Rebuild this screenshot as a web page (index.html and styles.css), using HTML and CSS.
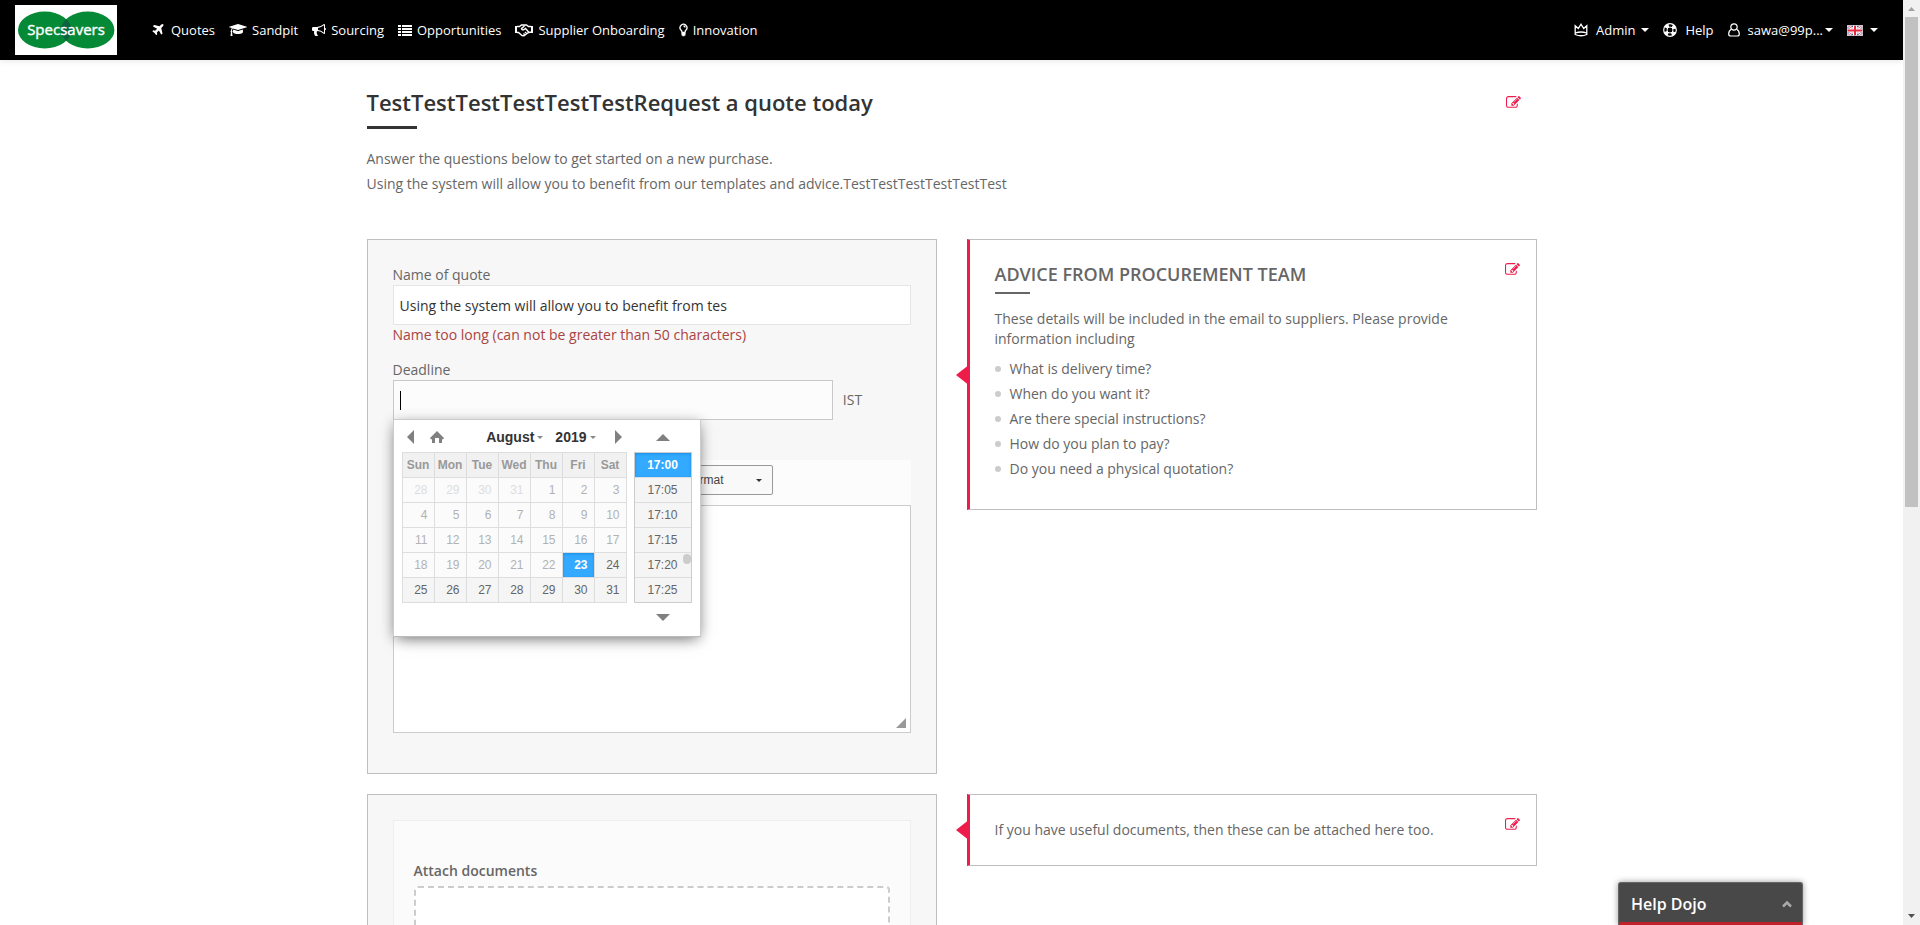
FILE: index.html
```html
<!DOCTYPE html>
<html lang="en">
<head>
<meta charset="utf-8">
<title>Request a quote</title>
<link rel="stylesheet" href="styles.css">
</head>
<body>
<svg class="sprite" aria-hidden="true">
  <symbol id="edit" viewBox="0 0 1792 1792"><path d="M888 1184l116-116-152-152-116 116v56h96v96h56zm440-720q-16-16-33 1l-350 350q-17 17-1 33t33-1l350-350q17-17 1-33zm80 594v190q0 119-84.500 203.500t-203.500 84.500h-832q-119 0-203.500-84.500t-84.500-203.500v-832q0-119 84.500-203.500t203.500-84.500h832q63 0 117 25 15 7 18 23 3 17-9 29l-49 49q-14 14-32 8-23-6-45-6h-832q-66 0-113 47t-47 113v832q0 66 47 113t113 47h832q66 0 113-47t47-113v-126q0-13 9-22l64-64q15-15 35-7t20 29zm-96-738l288 288-672 672h-288v-288zm444 132l-92 92-288-288 92-92q28-28 68-28t68 28l152 152q28 28 28 68t-28 68z"/></symbol>
</svg>
<div class="app">
  <div class="page">
    <header class="navbar">
      <a class="logo" href="#" aria-label="Specsavers">
        <svg width="102" height="50" viewBox="0 0 102 50">
          <rect width="102" height="50" fill="#fff"/>
          <ellipse cx="29.700" cy="25" rx="26.700" ry="18.500" fill="#048a36"/>
          <ellipse cx="72.700" cy="25" rx="26.700" ry="18.500" fill="#048a36"/>
          <path d="M51.200 14Q56.400 19 56.400 25T51.200 36Q46 31 46 25T51.200 14z" fill="#0b6440"/>
          <text x="51" y="30" text-anchor="middle" class="logo-text">Specsavers</text>
        </svg>
      </a>
      <nav class="menu">
        <a href="#"><svg class="gap-wide" width="14" height="14" viewBox="0 0 1792 1792"><path d="M1568 160q44 52 12 148t-108 172l-161 161 160 696q5 19-12 33l-128 96q-7 6-19 6-4 0-7-1-15-3-21-16l-279-508-259 259 53 194q5 17-8 31l-96 96q-9 9-23 9h-2q-15-2-24-13l-189-252-252-189q-11-7-13-23-1-13 9-25l96-97q9-9 23-9 6 0 8 1l194 53 259-259-508-279q-14-8-17-24-2-16 9-27l128-128q14-13 30-8l665 159 160-160q76-76 172-108t148 12z"/></svg>Quotes</a>
        <a href="#"><svg width="18" height="14" viewBox="0 0 2304 1792"><path d="M1774 836l18 316q4 69-82 128t-235 93.500-323 34.500-323-34.500-235-93.500-82-128l18-316 574 181q22 7 48 7t48-7zm530-324q0 23-22 31l-1120 352q-4 1-10 1t-10-1l-652-206q-43 34-71 111.500t-34 178.500q63 36 63 109 0 69-58 107l58 433q2 14-8 25-9 11-24 11h-192q-15 0-24-11-10-11-8-25l58-433q-58-38-58-107 0-73 65-111 11-207 98-330l-333-104q-22-8-22-31t22-31l1120-352q4-1 10-1t10 1l1120 352q22 8 22 31z"/></svg>Sandpit</a>
        <a href="#"><svg width="14" height="14" viewBox="0 0 1792 1792"><path d="M1664 640q53 0 90.500 37.500t37.500 90.500-37.500 90.500-90.500 37.500v384q0 52-38 90t-90 38q-417-347-812-380-58 19-91 66t-31 100.500 40 92.500q-20 33-23 65.500t6 58 33.500 55 48 50 61.500 50.500q-29 58-111.500 83t-168.500 11.500-132-55.500q-7-23-29.500-87.500t-32-94.500-23-89-15-101 3.500-98.500 22-110.500h-122q-66 0-113-47t-47-113v-192q0-66 47-113t113-47h480q435 0 896-384 52 0 90 38t38 90v384zm-128 604v-954q-394 302-768 343v270q377 42 768 341z"/></svg>Sourcing</a>
        <a href="#"><svg width="14" height="14" viewBox="0 0 14 14"><path d="M0 2h3v2H0zM4 2h10v2H4zM0 5h3v2H0zM4 5h10v2H4zM0 8h3v2H0zM4 8h10v2H4zM0 11h3v2H0zM4 11h10v2H4z"/></svg>Opportunities</a>
        <a href="#"><svg width="18" height="14" viewBox="0 0 18 14"><path d="M0 3h2v7H0zM16 3h2v7h-2z"/><path d="M2 3.500h2.500L6.500 2h5l2 1.500H16M2 9.500h1.500L7 12.500l2 .3 4-3 1.500-.5H16M9.500 3L6.500 5.500q.5 2 2.500 1l1.500-1 3.500 4M10 9l1.500 1.500M8.500 10.500l1 1" fill="none" stroke="currentColor" stroke-width="1.400"/></svg>Supplier Onboarding</a>
        <a href="#"><svg width="9" height="14" viewBox="0 0 9 14"><path d="M3 9.500Q3 8 2 7A3.400 3.400 0 1 1 7 7Q6 8 6 9.500zM4.500 3Q6 3 6 4.500" fill="none" stroke="currentColor" stroke-width="1.300"/><path d="M2.500 10h4v2.500h-1v.8h-2v-.8h-1z"/></svg>Innovation</a>
      </nav>
      <nav class="account">
        <a href="#"><svg class="gap-wide" width="14" height="14" viewBox="0 0 14 14"><path d="M1.200 10V2.800L4.300 5.500 7 1.200 9.700 5.500l3.100-2.700V10Q7 8 1.200 10zM1.200 10v1.500Q7 14 12.800 11.500V10" fill="none" stroke="currentColor" stroke-width="1.300"/></svg>Admin<i class="caret caret--far"></i></a>
        <a href="#"><svg class="gap-wide" width="14" height="14" viewBox="0 0 14 14"><circle cx="7" cy="7" r="6.300" fill="none" stroke="currentColor" stroke-width="1.200"/><circle cx="7" cy="7" r="4.700" fill="none" stroke="currentColor" stroke-width="3.400" stroke-dasharray="3.700 3.680" stroke-dashoffset="-1.850"/><circle cx="7" cy="7" r="3" fill="none" stroke="currentColor"/></svg>Help</a>
        <a href="#"><svg class="gap-wide" width="12" height="14" viewBox="0 0 12 14"><circle cx="6" cy="4" r="3.200" fill="none" stroke="currentColor" stroke-width="1.200"/><path d="M3.300 6.200Q.7 7.500.7 11q0 2 2 2h6.600q2 0 2-2 0-3.500-2.600-4.800" fill="none" stroke="currentColor" stroke-width="1.200"/></svg>sawa@99p...<i class="caret"></i></a>
        <a href="#" aria-label="Language"><svg width="16" height="11" viewBox="0 0 16 11"><rect width="16" height="11" fill="#4a62a8"/><path d="M0 0l16 11M16 0L0 11" stroke="#fff" stroke-width="2.400"/><path d="M0 0l16 11M16 0L0 11" stroke="#e04050" stroke-width=".8"/><path d="M8 0v11M0 5.500h16" stroke="#fff" stroke-width="4"/><path d="M8 0v11M0 5.500h16" stroke="#e8283c" stroke-width="2"/><rect x=".5" y=".5" width="15" height="10" fill="none" stroke="#ccc" stroke-opacity=".8"/></svg><i class="caret"></i></a>
      </nav>
    </header>

    <main class="container">
      <div class="intro">
        <div>
          <h1>TestTestTestTestTestTestRequest a quote today</h1>
          <p>Answer the questions below to get started on a new purchase.<br>Using the system will allow you to benefit from our templates and advice.TestTestTestTestTestTest</p>
        </div>
        <button class="edit" type="button" aria-label="Edit introduction"><svg width="15" height="15"><use href="#edit"/></svg></button>
      </div>

      <section class="row">
        <form class="panel">
          <div class="field">
            <label for="name">Name of quote</label>
            <input class="text-input" id="name" type="text" value="Using the system will allow you to benefit from tes">
            <p class="error">Name too long (can not be greater than 50 characters)</p>
          </div>
          <div class="field">
            <label for="deadline">Deadline</label>
            <div class="deadline">
              <div class="deadline__box">
                <input class="text-input text-input--active" id="deadline" type="text">
                <i class="cursor"></i>
                <div class="picker">
                  <div class="calendar">
                    <div class="calendar__bar">
                      <button type="button" aria-label="Previous month"><svg width="7" height="14"><path d="M7 0v14L0 7z"/></svg></button>
                      <button class="home" type="button" aria-label="Today"><svg width="14" height="12"><path d="M7 0l7 7-1 1.500L12 8v4H9V7H5v5H2V8l-1 .5L0 7z"/></svg></button>
                      <button class="month" type="button">August<i></i></button>
                      <button class="year" type="button">2019<i></i></button>
                      <button type="button" aria-label="Next month"><svg width="7" height="14"><path d="M0 0v14l7-7z"/></svg></button>
                    </div>
                    <table>
                      <thead><tr><th>Sun</th><th>Mon</th><th>Tue</th><th>Wed</th><th>Thu</th><th>Fri</th><th>Sat</th></tr></thead>
                      <tbody>
                        <tr class="past"><td class="other">28</td><td class="other">29</td><td class="other">30</td><td class="other">31</td><td>1</td><td>2</td><td>3</td></tr>
                        <tr class="past"><td>4</td><td>5</td><td>6</td><td>7</td><td>8</td><td>9</td><td>10</td></tr>
                        <tr class="past"><td>11</td><td>12</td><td>13</td><td>14</td><td>15</td><td>16</td><td>17</td></tr>
                        <tr class="past"><td>18</td><td>19</td><td>20</td><td>21</td><td>22</td><td class="selected">23</td><td class="open">24</td></tr>
                        <tr><td>25</td><td>26</td><td>27</td><td>28</td><td>29</td><td>30</td><td>31</td></tr>
                      </tbody>
                    </table>
                  </div>
                  <div class="times">
                    <button class="times__arrow times__arrow--up" type="button" aria-label="Earlier"><svg width="14" height="7"><path d="M0 7L7 0l7 7z"/></svg></button>
                    <div class="times__list">
                      <button class="selected" type="button">17:00</button>
                      <button type="button">17:05</button>
                      <button type="button">17:10</button>
                      <button type="button">17:15</button>
                      <button type="button">17:20</button>
                      <button type="button">17:25</button>
                      <i class="times__thumb"></i>
                    </div>
                    <button class="times__arrow" type="button" aria-label="Later"><svg width="14" height="7"><path d="M0 0h14L7 7z"/></svg></button>
                  </div>
                </div>
              </div>
              <span>IST</span>
            </div>
          </div>
          <div class="editor">
            <div class="editor__bar">
              <div class="format">
                <select aria-label="Paragraph format"><option>Format</option></select>
                <svg width="6" height="3"><path d="M0 0h6L3 3z"/></svg>
              </div>
            </div>
            <div class="editor__area">
              <textarea aria-label="Quote details"></textarea>
              <svg class="grip" width="10" height="10"><path d="M10 0v10H0z"/></svg>
            </div>
          </div>
        </form>
        <aside class="note">
          <div class="note__body">
            <h2>ADVICE FROM PROCUREMENT TEAM</h2>
            <p>These details will be included in the email to suppliers. Please provide information including</p>
            <ul>
              <li>What is delivery time?</li>
              <li>When do you want it?</li>
              <li>Are there special instructions?</li>
              <li>How do you plan to pay?</li>
              <li>Do you need a physical quotation?</li>
            </ul>
          </div>
          <button class="edit" type="button" aria-label="Edit advice"><svg width="15" height="15"><use href="#edit"/></svg></button>
        </aside>
      </section>

      <section class="row">
        <div class="panel">
          <div class="upload">
            <h3>Attach documents</h3>
            <div class="dropzone"></div>
          </div>
        </div>
        <aside class="note">
          <div class="note__body">
            <p>If you have useful documents, then these can be attached here too.</p>
          </div>
          <button class="edit" type="button" aria-label="Edit note"><svg width="15" height="15"><use href="#edit"/></svg></button>
        </aside>
      </section>
    </main>

    <button class="dojo" type="button">Help Dojo<svg width="10" height="8"><path d="M1 6.500l4-4 4 4" fill="none" stroke="#aaa" stroke-width="2.500"/></svg></button>
  </div>
  <div class="scrollbar" aria-hidden="true">
    <svg width="17" height="17"><path d="M5 11h7L8.500 7z" fill="#a3a3a3"/></svg>
    <i class="scrollbar__thumb"></i>
    <svg class="scrollbar__down" width="17" height="17"><path d="M5 6h7l-3.500 4z" fill="#505050"/></svg>
  </div>
</div>
</body>
</html>
```

FILE: styles.css
```css
* { box-sizing: border-box; }
body {
  margin: 0;
  color: #666;
  background: #fff;
  font: 14px/20px "Open Sans", "Noto Sans", sans-serif;
}
h1, h2, h3, p, ul { margin: 0; padding: 0; font-weight: 400; }
button { margin: 0; padding: 0; border: 0; background: none; font: inherit; color: inherit; }
button svg { display: block; }
svg { fill: currentColor; flex: none; }
.sprite { display: none; }

.app { display: grid; grid-template-columns: 1fr 17px; height: 100vh; overflow: hidden; }
.page { position: relative; overflow: hidden; }

/* Navigation */
.navbar {
  display: flex;
  align-items: center;
  height: 60px;
  padding: 0 25px 0 15px;
  background: #000;
  color: #fff;
  font-size: 13px;
  font-weight: 500;
  box-shadow: 0 1px 6px rgba(0, 0, 0, .1);
}
.logo { display: block; height: 50px; margin-right: 34px; }
.logo-text { font: 400 15px "Open Sans", sans-serif; fill: #fff; stroke: #fff; stroke-width: .4px; }
.menu, .account { display: flex; gap: 14px; }
.account { margin-left: auto; }
.navbar nav a { display: flex; align-items: center; color: inherit; text-decoration: none; }
.navbar nav svg { margin-right: 5px; }
.navbar nav .gap-wide { margin-right: 8px; }
.menu a:first-child svg { margin-right: 6px; }
.caret { margin-left: 2px; border: 4px solid transparent; border-top-color: #fff; border-bottom: 0; }
.caret--far { margin-left: 6px; }

/* Main content */
.container { width: 100%; max-width: 1170px; margin: 0 auto; padding-top: 27px; }
.intro { display: flex; justify-content: space-between; align-items: flex-start; margin-bottom: 43px; padding-right: 16px; }
.intro h1 { color: #333; font-size: 22px; font-weight: 600; line-height: 30px; }
.intro h1::after { content: ""; display: block; width: 50px; height: 3px; margin: 9px 0 17px; background: #333; }
.intro p { line-height: 25px; }
.edit { color: #ee1c4b; }
.intro .edit { padding-top: 8px; }

.row { display: grid; grid-template-columns: 1fr 1fr; gap: 30px; align-items: start; margin-bottom: 20px; }
.panel { padding: 25px; background: #f7f7f7; border: 1px solid #bfbfbf; }
.field { margin-bottom: 15px; }
.field label { display: block; }
.text-input {
  display: block;
  width: 100%;
  height: 40px;
  padding: 0 6px;
  border: 1px solid #e5e5e5;
  background: #fff;
  color: #333;
  font: inherit;
  outline: 0;
}
.text-input--active { border-color: #c8c8c8; background: #fcfcfc; }
.error { color: #a94442; }
.deadline { display: flex; align-items: center; gap: 10px; }
.deadline__box { position: relative; width: 85%; }
.cursor { position: absolute; left: 7px; top: 11px; width: 1px; height: 19px; background: #000; }

/* Date and time picker */
.picker {
  position: absolute;
  z-index: 2;
  top: 39px;
  left: 0;
  display: flex;
  gap: 7px;
  padding: 8px 8px 4px;
  border: 1px solid #ccc;
  border-bottom-color: #bbb;
  background: #fff;
  color: #808080;
  box-shadow: 0 5px 15px -5px rgba(0, 0, 0, .5), 0 2px 12px rgba(0, 0, 0, .2);
  font: 12px/24px "Liberation Sans", Arial, sans-serif;
}
.calendar { width: 225px; }
.calendar__bar { display: flex; align-items: center; height: 18px; margin-bottom: 6px; padding: 0 5px; }
.home { margin-left: 16px; }
.month, .year { display: flex; align-items: center; gap: 3px; color: #333; font-size: 14px; font-weight: 700; }
.month { margin-left: auto; }
.year { margin: 0 19px 0 12px; }
.month i, .year i { border: 3px solid transparent; border-top-color: #888; border-bottom: 0; }
.calendar table { width: 100%; border-collapse: collapse; table-layout: fixed; }
.calendar th, .calendar td { height: 25px; padding: 0; border: 1px solid #ddd; background: #f5f5f5; line-height: 24px; }
.calendar th { background: #f1f1f1; color: #999; }
.calendar td { padding-right: 6px; color: #666; text-align: right; }
.calendar .past td { background: #fbfbfb; color: #b2b2b2; }
.calendar .past .other { color: #ddd; }
.calendar .past .open { background: #f5f5f5; color: #666; }
.calendar .past .selected, .times__list .selected {
  background: #33aaff;
  box-shadow: inset 0 1px 3px #178fe5;
  color: #fff;
  font-weight: 700;
}
.times { display: flex; flex-direction: column; width: 58px; }
.times__arrow { display: flex; align-items: center; justify-content: center; height: 29px; }
.times__arrow--up { height: 24px; padding-bottom: 5px; }
.times__list { position: relative; border: 1px solid #ccc; }
.times__list button { display: block; width: 100%; height: 25px; border-bottom: 1px solid #ddd; background: #f5f5f5; color: #666; }
.times__list button:nth-child(6) { height: 24px; border-bottom: 0; }
.times__thumb { position: absolute; right: 0; top: 101px; width: 8px; height: 10px; border-radius: 4px; background: #ccc; }

/* Text editor */
.editor { margin: 40px 0 15px; }
.editor__bar { display: flex; height: 45px; padding: 5px 0 10px 280px; background: #fcfcfc; }
.format { position: relative; width: 100px; }
.format select {
  width: 100%;
  height: 30px;
  padding: 0 12px;
  border: 1px solid #999;
  border-radius: 2px;
  background: #f9f9f9;
  color: #444;
  font: 12px "Liberation Sans", Arial, sans-serif;
  appearance: none;
}
.format svg { position: absolute; right: 11px; top: 14px; color: #333; }
.editor__area { position: relative; }
.editor textarea { display: block; width: 100%; height: 228px; border: 1px solid #ccc; background: #fff; resize: none; }
.grip { position: absolute; right: 5px; bottom: 5px; color: #999; }

/* Advice notes */
.note {
  position: relative;
  display: flex;
  align-items: flex-start;
  justify-content: space-between;
  padding: 22px 16px 22px 25px;
  border: 1px solid #bfbfbf;
  border-left: 3px solid #ee1c4b;
}
.note::before {
  content: "";
  position: absolute;
  top: 50%;
  right: 100%;
  border: 11px solid transparent;
  border-right: 14px solid #ee1c4b;
  border-left: 0;
  transform: translateY(-50%);
}
.note__body { padding: 3px 0; }
.note h2 { font-size: 18px; font-weight: 600; line-height: 18px; }
.note h2::after { content: ""; display: block; width: 35px; height: 2px; margin: 9px 0 15px; background: #666; }
.note ul { margin: 7px 0 3px; list-style: none; }
.note li { display: flex; align-items: center; gap: 9px; line-height: 25px; }
.note li::before { content: ""; width: 6px; height: 6px; border-radius: 50%; background: #ccc; }

/* Upload */
.upload { padding: 40px 20px 20px; border: 1px solid #eee; background: #fbfbfb; }
.upload h3 { font-size: 14px; font-weight: 600; margin-bottom: 5px; }
.dropzone { height: 150px; border: 2px dashed #ccc; border-radius: 4px; background: #fff; }

/* Help widget */
.dojo {
  position: absolute;
  right: 100px;
  bottom: 0;
  display: flex;
  align-items: center;
  justify-content: space-between;
  width: 185px;
  height: 43px;
  padding: 0 10px 0 12px;
  border: 1px solid #666;
  border-bottom: 0;
  border-radius: 3px 3px 0 0;
  background: linear-gradient(#c1222a, #c1222a) 0 39px / 100% 3px no-repeat #484848;
  box-shadow: 0 0 6px rgba(0, 0, 0, .4);
  color: #fff;
  font-size: 16px;
  font-weight: 600;
}

.scrollbar { display: flex; flex-direction: column; background: #f1f1f1; }
.scrollbar__thumb { height: 53%; margin: 0 2px; background: #c1c1c1; }
.scrollbar__down { margin-top: auto; }
```
